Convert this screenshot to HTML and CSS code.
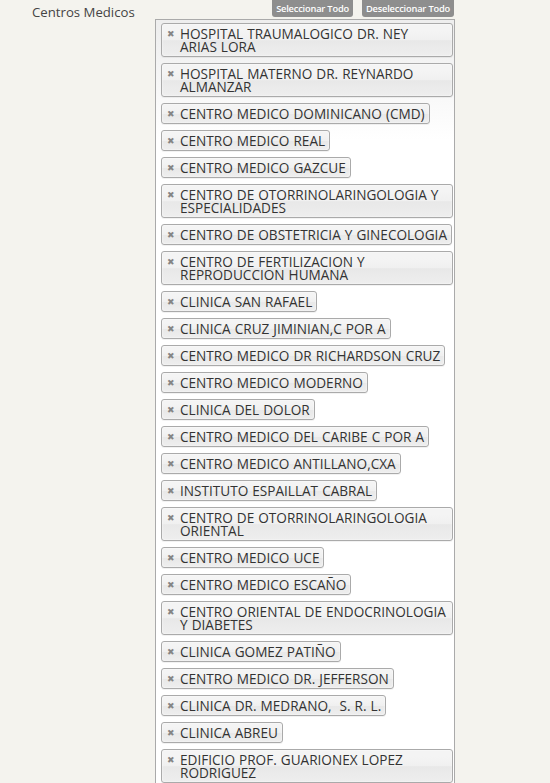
FILE: index.html
```html
<!DOCTYPE html>
<html lang="es">
<head>
    <meta charset="UTF-8">
    <meta name="viewport" content="width=device-width, initial-scale=1.0">
    <title>Centros Medicos</title>
    <link rel="stylesheet" href="styles.css">
</head>
<body>
    <div class="form-row">
        <label class="field-label">Centros Medicos</label>
        <div class="field">
            <div class="select-actions">
                <button class="btn-small">Seleccionar Todo</button>
                <button class="btn-small">Deseleccionar Todo</button>
            </div>
            <ul class="chosen-choices">
                <li class="search-choice"><span class="close">&#x2716;</span>HOSPITAL TRAUMALOGICO DR. NEY ARIAS LORA</li>
                <li class="search-choice"><span class="close">&#x2716;</span>HOSPITAL MATERNO DR. REYNARDO ALMANZAR</li>
                <li class="search-choice"><span class="close">&#x2716;</span>CENTRO MEDICO DOMINICANO (CMD)</li>
                <li class="search-choice"><span class="close">&#x2716;</span>CENTRO MEDICO REAL</li>
                <li class="search-choice"><span class="close">&#x2716;</span>CENTRO MEDICO GAZCUE</li>
                <li class="search-choice"><span class="close">&#x2716;</span>CENTRO DE OTORRINOLARINGOLOGIA Y ESPECIALIDADES</li>
                <li class="search-choice"><span class="close">&#x2716;</span>CENTRO DE OBSTETRICIA Y GINECOLOGIA</li>
                <li class="search-choice"><span class="close">&#x2716;</span>CENTRO DE FERTILIZACION Y REPRODUCCION HUMANA</li>
                <li class="search-choice"><span class="close">&#x2716;</span>CLINICA SAN RAFAEL</li>
                <li class="search-choice"><span class="close">&#x2716;</span>CLINICA CRUZ JIMINIAN,C POR A</li>
                <li class="search-choice"><span class="close">&#x2716;</span>CENTRO MEDICO DR RICHARDSON CRUZ</li>
                <li class="search-choice"><span class="close">&#x2716;</span>CENTRO MEDICO MODERNO</li>
                <li class="search-choice"><span class="close">&#x2716;</span>CLINICA DEL DOLOR</li>
                <li class="search-choice"><span class="close">&#x2716;</span>CENTRO MEDICO DEL CARIBE C POR A</li>
                <li class="search-choice"><span class="close">&#x2716;</span>CENTRO MEDICO ANTILLANO,CXA</li>
                <li class="search-choice"><span class="close">&#x2716;</span>INSTITUTO ESPAILLAT CABRAL</li>
                <li class="search-choice"><span class="close">&#x2716;</span>CENTRO DE OTORRINOLARINGOLOGIA ORIENTAL</li>
                <li class="search-choice"><span class="close">&#x2716;</span>CENTRO MEDICO UCE</li>
                <li class="search-choice"><span class="close">&#x2716;</span>CENTRO MEDICO ESCAÑO</li>
                <li class="search-choice"><span class="close">&#x2716;</span>CENTRO ORIENTAL DE ENDOCRINOLOGIA Y DIABETES</li>
                <li class="search-choice"><span class="close">&#x2716;</span>CLINICA GOMEZ PATIÑO</li>
                <li class="search-choice"><span class="close">&#x2716;</span>CENTRO MEDICO DR. JEFFERSON</li>
                <li class="search-choice"><span class="close">&#x2716;</span>CLINICA DR. MEDRANO,&nbsp; S. R. L.</li>
                <li class="search-choice"><span class="close">&#x2716;</span>CLINICA ABREU</li>
                <li class="search-choice"><span class="close">&#x2716;</span>EDIFICIO PROF. GUARIONEX LOPEZ RODRIGUEZ</li>
            </ul>
        </div>
    </div>
</body>
</html>
```

FILE: styles.css
```css
* {
    margin: 0;
    padding: 0;
    box-sizing: border-box;
}

body {
    font-family: 'Open Sans', 'Noto Sans', sans-serif;
    background: #f4f3ee;
    color: #333;
    overflow: hidden;
}

.form-row {
    display: flex;
    align-items: flex-start;
}

.field-label {
    width: 155px;
    padding: 3px 0 0 32px;
    font-size: 13.2px;
    color: #444;
}

.field {
    width: 300px;
}

.select-actions {
    display: flex;
    justify-content: flex-end;
    gap: 9px;
    margin-top: -3px;
    padding-right: 1px;
}

.btn-small {
    font-family: 'Open Sans', sans-serif;
    font-size: 9.3px;
    font-weight: 600;
    color: #fff;
    background: #8e8e8e;
    border: none;
    border-radius: 3px;
    height: 20px;
    padding: 3px 4px 0;
    letter-spacing: -0.2px;
}

.chosen-choices {
    list-style: none;
    margin-top: 2px;
    background: linear-gradient(#eee 1%, #fff 15%);
    border: 1px solid #aaa;
    padding: 0 1px 0 5px;
    display: flex;
    flex-direction: column;
    align-items: flex-start;
    height: 800px;
}

.search-choice {
    position: relative;
    margin: 3px 0;
    padding: 3px 4px 3px 18px;
    line-height: 13px;
    font-size: 13.6px;
    word-spacing: 0.5px;
    color: #333;
    border: 1px solid #aaa;
    border-radius: 3px;
    background: linear-gradient(#f4f4f4 20%, #f0f0f0 50%, #e8e8e8 52%, #eee 100%);
    box-shadow: 0 0 2px #fff inset, 0 1px 0 rgba(0, 0, 0, 0.05);
}

.close {
    position: absolute;
    left: 5px;
    top: 4px;
    font-size: 9px;
    line-height: 11px;
    color: #858585;
}
```
